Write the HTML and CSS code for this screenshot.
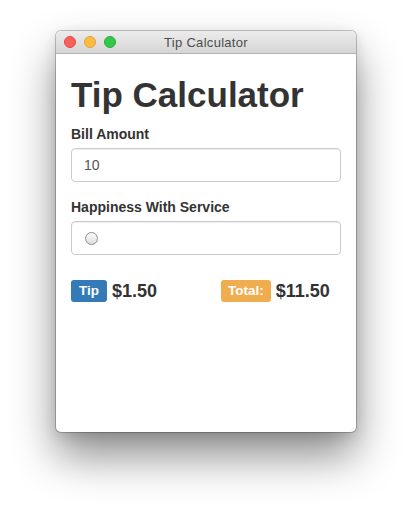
FILE: index.html
```html
<!DOCTYPE html>
<html lang="en">
<head>
<meta charset="utf-8">
<title>Tip Calculator</title>
<link rel="stylesheet" href="styles.css">
</head>
<body>
  <div class="window">
    <div class="titlebar">
      <div class="lights">
        <span class="light red"></span>
        <span class="light yellow"></span>
        <span class="light green"></span>
      </div>
      <div class="title">Tip Calculator</div>
    </div>
    <div class="content">
      <h1 class="heading">Tip Calculator</h1>
      <div class="form-group">
        <label class="label">Bill Amount</label>
        <div class="field">10</div>
      </div>
      <div class="form-group">
        <label class="label">Happiness With Service</label>
        <div class="field"><span class="radio"></span></div>
      </div>
      <div class="results">
        <div class="result"><span class="badge badge-tip">Tip</span><span class="amount">$1.50</span></div>
        <div class="result"><span class="badge badge-total">Total:</span><span class="amount">$11.50</span></div>
      </div>
    </div>
  </div>
</body>
</html>
```
FILE: styles.css
```css
html, body {
  margin: 0;
  background: #ffffff;
}
body {
  box-sizing: border-box;
  min-height: 512px;
  padding: 31px 56px;
  font-family: "Liberation Sans", Arial, sans-serif;
  color: #333333;
}
.window {
  width: 300px;
  height: 401px;
  box-sizing: border-box;
  background: #ffffff;
  border-radius: 5px;
  overflow: hidden;
  box-shadow: 0 0 0 1px rgba(0,0,0,0.22), 0 24px 44px rgba(0,0,0,0.45), 0 4px 14px rgba(0,0,0,0.12);
}
.titlebar {
  position: relative;
  height: 22px;
  background: linear-gradient(#ececec, #d5d5d5);
  border-bottom: 1px solid #b2b2b2;
  display: flex;
  align-items: center;
  justify-content: center;
}
.lights {
  position: absolute;
  left: 8px;
  top: 5px;
  display: flex;
  gap: 8px;
}
.light {
  width: 12px;
  height: 12px;
  box-sizing: border-box;
  border-radius: 50%;
}
.red { background: #fc605c; border: 1px solid #de4a45; }
.yellow { background: #fdbc40; border: 1px solid #dea236; }
.green { background: #34c84a; border: 1px solid #2aac3a; }
.title {
  font-size: 13px;
  color: #4d4d4d;
  letter-spacing: 0.3px;
}
.content {
  padding: 21px 15px 0;
}
.heading {
  margin: 0 0 9px;
  font-size: 35px;
  line-height: 40px;
  font-weight: bold;
  color: #333333;
}
.form-group {
  margin-bottom: 15px;
}
.label {
  display: block;
  font-size: 14px;
  line-height: 20px;
  font-weight: bold;
  margin-bottom: 4px;
}
.field {
  height: 34px;
  box-sizing: border-box;
  border: 1px solid #cccccc;
  border-radius: 4px;
  padding: 0 12px;
  display: flex;
  align-items: center;
  font-size: 14px;
  color: #555555;
  box-shadow: inset 0 1px 1px rgba(0,0,0,0.075);
}
.radio {
  width: 13px;
  height: 13px;
  box-sizing: border-box;
  border-radius: 50%;
  border: 1px solid #8e8e8e;
  background: linear-gradient(#fbfbfb, #dedede);
  margin-left: 1px;
}
.results {
  margin-top: 25px;
  display: grid;
  grid-template-columns: 1fr 1fr;
  column-gap: 30px;
}
.result {
  display: flex;
  align-items: center;
  gap: 5px;
}
.badge {
  display: inline-block;
  font-size: 13.5px;
  line-height: 15px;
  font-weight: bold;
  color: #ffffff;
  padding: 3px 8px 4px;
  border-radius: 3px;
}
.badge-tip { background: #337ab7; }
.badge-total { background: #f0ad4e; padding: 3px 7px 4px; }
.amount {
  font-size: 18px;
  font-weight: bold;
  line-height: 22px;
  color: #333333;
}
```
